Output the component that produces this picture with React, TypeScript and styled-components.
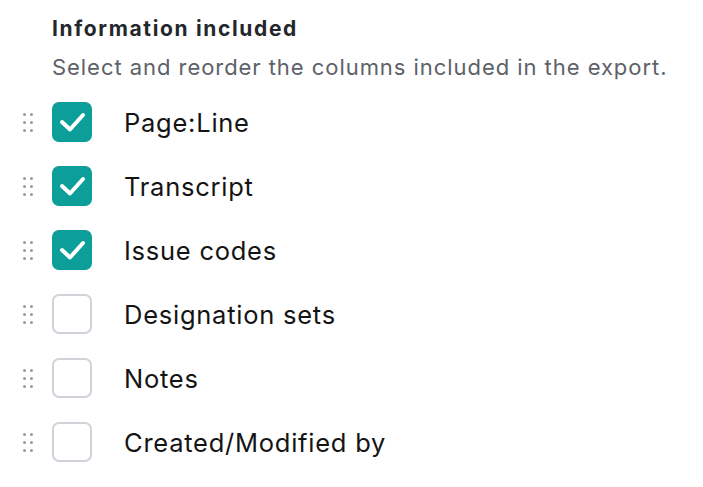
import React from "react";
import styled, {createGlobalStyle} from "styled-components";

const GlobalStyle = createGlobalStyle`
    body {
        margin: 0;
        background: #ffffff;
        font-family: Inter, "Liberation Sans", sans-serif;
    }
`;

const Section = styled.div`
    padding: 14px 0 0 22px;
`;
const Header = styled.div`
    padding-left: 30px;
    margin-bottom: 8px;
`;
const Title = styled.h3`
    margin: 0;
    font-size: 21px;
    line-height: 30px;
    font-weight: 700;
    letter-spacing: 1.65px;
    color: #24272b;
`;
const Subtitle = styled.p`
    margin: 8px 0 0;
    font-size: 22px;
    line-height: 30px;
    letter-spacing: 0.95px;
    color: #5d6168;
`;
const List = styled.ul`
    list-style: none;
    margin: 0;
    padding: 0;
`;
const Row = styled.li`
    display: flex;
    align-items: center;
    height: 64px;
`;
const Handle = styled.span`
    display: grid;
    grid-template-columns: repeat(2, 3px);
    grid-auto-rows: 3px;
    column-gap: 4px;
    row-gap: 5px;
    width: 29px;
    padding-left: 1px;
    span {
        width: 3px;
        height: 3px;
        border-radius: 50%;
        background: #959aa2;
    }
`;
const Box = styled.span<{ $checked: boolean }>`
    box-sizing: border-box;
    width: 40px;
    height: 40px;
    border-radius: 7px;
    display: flex;
    background: ${props => props.$checked ? '#0c9e98' : '#ffffff'};
    border: ${props => props.$checked ? 'none' : '2px solid #cfd3d9'};
`;
const Label = styled.span`
    margin-left: 32px;
    font-size: 25.5px;
    letter-spacing: 0.75px;
    color: #141414;
`;

const columns = [
    {name: 'Page:Line', checked: true},
    {name: 'Transcript', checked: true},
    {name: 'Issue codes', checked: true},
    {name: 'Designation sets', checked: false},
    {name: 'Notes', checked: false},
    {name: 'Created/Modified by', checked: false},
];

const Check = () => (
    <svg width="40" height="40" viewBox="0 0 40 40" fill="none">
        <path d="M10 20l8 7.5L31 13" stroke="#fff" strokeWidth="4" strokeLinecap="round" strokeLinejoin="round"/>
    </svg>
);

const App = () => {
    return (
        <Section>
            <GlobalStyle/>
            <Header>
                <Title>Information included</Title>
                <Subtitle>Select and reorder the columns included in the export.</Subtitle>
            </Header>
            <List>
                {columns.map(col => (
                    <Row key={col.name}>
                        <Handle>
                            {new Array(6).fill(0).map((_, i) => <span key={i}/>)}
                        </Handle>
                        <Box $checked={col.checked}>{col.checked && <Check/>}</Box>
                        <Label>{col.name}</Label>
                    </Row>
                ))}
            </List>
        </Section>
    )
}

export default App;
